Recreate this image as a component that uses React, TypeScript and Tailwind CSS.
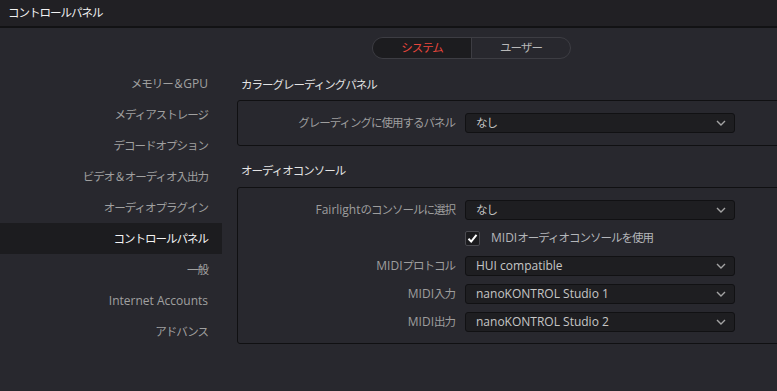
import { FunctionComponent, ReactNode } from "react";

const sideItems = [
  "メモリー＆GPU",
  "メディアストレージ",
  "デコードオプション",
  "ビデオ＆オーディオ入出力",
  "オーディオプラグイン",
  "コントロールパネル",
  "一般",
  "Internet Accounts",
  "アドバンス",
];

// Japanese runs are set a little tighter than the Latin ones, as in the original UI font
const jp = (text: string): ReactNode[] =>
  (text.match(/[\x00-\x7f]+|[^\x00-\x7f]+/g) || []).map((part, i) =>
    /^[\x00-\x7f]+$/.test(part) ? (
      <span key={i}>{part}</span>
    ) : (
      <span key={i} className="text-[11.5px] tracking-[-1px]">
        {part}
      </span>
    )
  );

const Chevron = () => (
  <svg width="10" height="6" viewBox="0 0 10 6" fill="none">
    <path d="M1 1 L5 5 L9 1" stroke="#a3a3a3" strokeWidth="1.4" />
  </svg>
);

const Select: FunctionComponent<{ value: string }> = ({ value }) => (
  <div className="w-[270px] h-[20px] rounded-[3px] border border-[#111113] bg-[#1e1e21] flex items-center justify-between pl-[10px] pr-[8px] text-[12px] text-[#c6c6c6]">
    <span>{jp(value)}</span>
    <Chevron />
  </div>
);

const Row: FunctionComponent<{ label?: string; children: ReactNode }> = ({ label, children }) => (
  <div className="flex items-center h-[20px] gap-[10px]">
    <div className="w-[217px] text-right text-[12px] text-[#9e9e9e] whitespace-nowrap">
      {label ? jp(label) : null}
    </div>
    {children}
  </div>
);

export default function App() {
  return (
    <div className="w-[777px] h-[391px] overflow-hidden bg-[#28282e] font-['Open_Sans','Noto_Sans_CJK_JP',sans-serif] leading-[16px]">
      <div className="h-[28px] bg-[#212024] border-b-2 border-[#121214] flex items-center pl-[8px] text-[12px] text-[#f2f2f2]">
        {jp("コントロールパネル")}
      </div>
      <div className="pt-[9px] pl-[372px]">
        <div className="flex h-[22px] w-[199px] rounded-full border border-[#3d3d43] overflow-hidden text-[12px]">
          <div className="w-[99px] bg-[#1c1c1f] border-r border-[#3d3d43] text-[#e8463c] flex items-center justify-center">
            {jp("システム")}
          </div>
          <div className="flex-1 text-[#b8b8b8] flex items-center justify-center">{jp("ユーザー")}</div>
        </div>
      </div>
      <div className="flex mt-[9px]">
        <div className="w-[222px] shrink-0 flex flex-col">
          {sideItems.map((item) => (
            <div
              key={item}
              className={
                item === "コントロールパネル"
                  ? "h-[31px] flex items-center justify-end pr-[14px] text-[12px] bg-[#1c1c1f] text-[#f5f5f5]"
                  : "h-[31px] flex items-center justify-end pr-[14px] text-[12px] text-[#a0a0a0]"
              }
            >
              <span>{jp(item)}</span>
            </div>
          ))}
        </div>
        <div className="pl-[15px] w-[620px] shrink-0">
          <div className="h-[32px] flex items-center pt-[2px] pl-[4px] text-[12px] text-[#e4e4e4]">
            <span>{jp("カラーグレーディングパネル")}</span>
          </div>
          <div className="rounded-[3px] border border-[#101012] py-[12px]">
            <Row label="グレーディングに使用するパネル">
              <Select value="なし" />
            </Row>
          </div>
          <div className="h-[41px] flex items-center pt-[9px] pl-[4px] text-[12px] text-[#e4e4e4]">
            <span>{jp("オーディオコンソール")}</span>
          </div>
          <div className="rounded-[3px] border border-[#101012] pt-[12px] pb-[11px] flex flex-col gap-[8px]">
            <Row label="Fairlightのコンソールに選択">
              <Select value="なし" />
            </Row>
            <Row>
              <div className="flex items-center gap-[11px] text-[12px] text-[#b4b6ba]">
                <div className="w-[15px] h-[15px] rounded-[2px] border border-[#4a4a50] bg-[#1b1b1e] flex items-center justify-center">
                  <svg width="11" height="11" viewBox="0 0 11 11" fill="none">
                    <path d="M1.5 5.8 L4.2 8.6 L9.5 1.8" stroke="#ffffff" strokeWidth="2" />
                  </svg>
                </div>
                <span>{jp("MIDIオーディオコンソールを使用")}</span>
              </div>
            </Row>
            <Row label="MIDIプロトコル">
              <Select value="HUI compatible" />
            </Row>
            <Row label="MIDI入力">
              <Select value="nanoKONTROL Studio 1" />
            </Row>
            <Row label="MIDI出力">
              <Select value="nanoKONTROL Studio 2" />
            </Row>
          </div>
        </div>
      </div>
    </div>
  );
}
